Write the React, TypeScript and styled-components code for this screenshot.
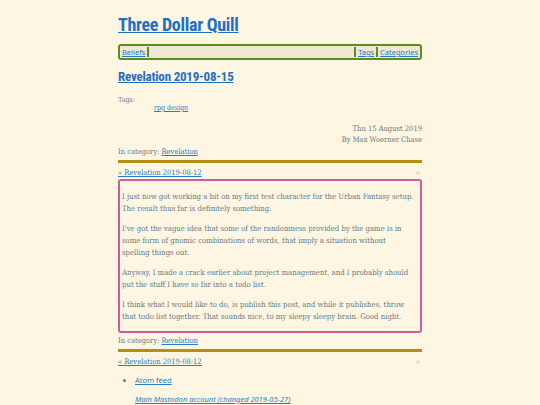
import * as React from "react"
import styled, { createGlobalStyle } from "styled-components"

const GlobalStyle = createGlobalStyle`
  body {
    margin: 0;
    background: #fdf6e3;
    color: #657b83;
    font-family: "DejaVu Serif", "Liberation Serif", serif;
    font-stretch: semi-condensed;
  }
  a { color: #2a7bc4; }
`

const Page = styled.div`
  width: 304px;
  margin: 0 auto;
  padding-top: 14px;
`

const SiteTitle = styled.h1`
  margin: 0 0 8px;
  font-family: Roboto, "Noto Sans", sans-serif;
  font-size: 18px;
  line-height: 22px;
  font-weight: 700;
  letter-spacing: -0.3px;
  a { color: #1e70c2; }
`

const NavBar = styled.nav`
  display: flex;
  align-items: center;
  height: 12px;
  padding: 0 1px;
  border: 2px solid #5f8d1c;
  border-radius: 3px;
  background: #eee8d5;
  font-family: "Noto Sans", "Open Sans", sans-serif;
  font-size: 7.5px;
`

const NavLink = styled.a`
  padding: 0 1px;
`

const Sep = styled.span`
  width: 2px;
  height: 10px;
  margin: 0 1px;
  background: #5f8d1c;
`

const Spacer = styled.span`
  flex: 1;
`

const PostTitle = styled.h2`
  margin: 9px 0 11px;
  font-family: Roboto, "Noto Sans", sans-serif;
  font-size: 13px;
  line-height: 16px;
  font-weight: 700;
  letter-spacing: -0.2px;
  a { color: #1e70c2; }
`

const Tags = styled.dl`
  margin: 0;
  font-size: 7px;
  line-height: 8px;
  dt { margin: 0; }
  dd { margin: 0 0 0 36px; }
`

const Meta = styled.div`
  margin-top: 11px;
  text-align: right;
  font-size: 7.5px;
  line-height: 11px;
`

const Category = styled.p`
  margin: ${(p: { $top: number }) => p.$top}px 0 0;
  font-size: 7.5px;
  line-height: 10px;
`

const Rule = styled.hr`
  margin: 3px 0 0;
  border: 0;
  height: 3px;
  background: #b58f12;
`

const PrevNext = styled.div`
  display: flex;
  justify-content: space-between;
  margin-top: 5px;
  font-size: 7.5px;
  line-height: 10px;
  span { color: #b9b3a3; padding-right: 2px; }
`

const PostBody = styled.div`
  margin-top: 1px;
  padding: 2px 3px 0 2px;
  border: 2px solid #d25b9c;
  border-radius: 3px;
  font-size: 7.7px;
  line-height: 12px;
  p { margin: 8px 0; }
`

const Links = styled.ul`
  margin: 8px 0 0;
  padding-left: 17px;
  font-size: 7.5px;
  line-height: 10px;
  font-family: "Noto Sans", "Open Sans", sans-serif;
`

const Social = styled.p`
  margin: 9px 0 0 17px;
  font-family: "Noto Sans", "Open Sans", sans-serif;
  font-style: italic;
  font-size: 7.5px;
  line-height: 10px;
`

export default function App() {
  return (
    <Page>
      <GlobalStyle />
      <SiteTitle><a href="#">Three Dollar Quill</a></SiteTitle>
      <NavBar>
        <NavLink href="#">Beliefs</NavLink>
        <Sep />
        <Spacer />
        <Sep />
        <NavLink href="#">Tags</NavLink>
        <Sep />
        <NavLink href="#">Categories</NavLink>
      </NavBar>
      <PostTitle><a href="#">Revelation 2019-08-15</a></PostTitle>
      <Tags>
        <dt>Tags:</dt>
        <dd><a href="#">rpg design</a></dd>
      </Tags>
      <Meta>
        <div>Thu 15 August 2019</div>
        <div>By Max Woerner Chase</div>
      </Meta>
      <Category $top={2}>In category: <a href="#">Revelation</a></Category>
      <Rule />
      <PrevNext><a href="#">« Revelation 2019-08-12</a><span>»</span></PrevNext>
      <PostBody>
        <p>I just now got working a bit on my first test character for the Urban Fantasy setup. The result thus far is definitely something.</p>
        <p>I've got the vague idea that some of the randomness provided by the game is in some form of gnomic combinations of words, that imply a situation without spelling&nbsp;things out.</p>
        <p>Anyway, I made a crack earlier about project management, and I probably should put the stuff I have so far into a todo list.</p>
        <p>I think what I would like to do, is publish this post, and while it publishes, throw that todo list together. That sounds nice, to my sleepy sleepy brain. Good night.</p>
      </PostBody>
      <Category $top={3}>In category: <a href="#">Revelation</a></Category>
      <Rule />
      <PrevNext><a href="#">« Revelation 2019-08-12</a><span>»</span></PrevNext>
      <Links>
        <li><a href="#">Atom feed</a></li>
      </Links>
      <Social><a href="#">Main Mastodon account (changed 2019-05-27)</a></Social>
    </Page>
  )
}
